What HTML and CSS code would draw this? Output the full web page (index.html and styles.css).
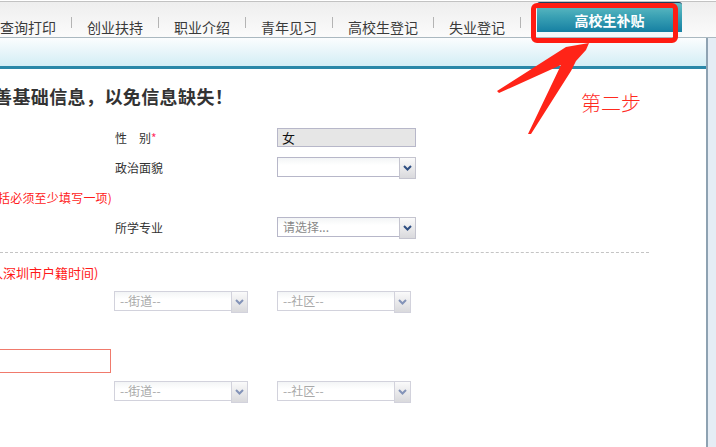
FILE: index.html
```html
<!DOCTYPE html>
<html lang="zh-CN">
<head>
<meta charset="utf-8">
<title>高校生补贴</title>
<link rel="stylesheet" href="styles.css">
</head>
<body>
<div class="page">
  <nav class="nav">
    <span class="nav-item first">查询打印</span><i class="sep"></i>
    <span class="nav-item">创业扶持</span><i class="sep"></i>
    <span class="nav-item">职业介绍</span><i class="sep"></i>
    <span class="nav-item">青年见习</span><i class="sep"></i>
    <span class="nav-item">高校生登记</span><i class="sep"></i>
    <span class="nav-item">失业登记</span><i class="sep"></i>
    <span class="tab">高校生补贴</span>
  </nav>
  <div class="body-area">
    <div class="main">
      <div class="band"></div>
      <div class="content">
        <h2 class="notice">善基础信息，以免信息缺失！</h2>
        <div class="row">
          <span class="label">性&emsp;别<em>*</em></span>
          <div class="input disabled">女</div>
        </div>
        <div class="row">
          <span class="label">政治面貌</span>
          <div class="select"><span class="val"></span><span class="btn"><svg width="9" height="6" viewBox="0 0 9 6"><polyline points="1,1 4.5,4.5 8,1" fill="none" stroke="#2f4f82" stroke-width="2"/></svg></span></div>
        </div>
        <div class="note-row"><span class="note n1">括必须至少填写一项)</span></div>
        <div class="row">
          <span class="label">所学专业</span>
          <div class="select"><span class="val ph">请选择...</span><span class="btn"><svg width="9" height="6" viewBox="0 0 9 6"><polyline points="1,1 4.5,4.5 8,1" fill="none" stroke="#2f4f82" stroke-width="2"/></svg></span></div>
        </div>
        <div class="divider"></div>
        <div class="note-row2"><span class="note n2">入深圳市户籍时间)</span></div>
        <div class="sel-row">
          <div class="select off"><span class="val">--街道--</span><span class="btn"><svg width="9" height="6" viewBox="0 0 9 6"><polyline points="1,1 4.5,4.5 8,1" fill="none" stroke="#8393b8" stroke-width="2"/></svg></span></div>
          <div class="select off"><span class="val">--社区--</span><span class="btn"><svg width="9" height="6" viewBox="0 0 9 6"><polyline points="1,1 4.5,4.5 8,1" fill="none" stroke="#8393b8" stroke-width="2"/></svg></span></div>
        </div>
        <div class="err-input"></div>
        <div class="sel-row second">
          <div class="select off"><span class="val">--街道--</span><span class="btn"><svg width="9" height="6" viewBox="0 0 9 6"><polyline points="1,1 4.5,4.5 8,1" fill="none" stroke="#8393b8" stroke-width="2"/></svg></span></div>
          <div class="select off"><span class="val">--社区--</span><span class="btn"><svg width="9" height="6" viewBox="0 0 9 6"><polyline points="1,1 4.5,4.5 8,1" fill="none" stroke="#8393b8" stroke-width="2"/></svg></span></div>
        </div>
      </div>
    </div>
    <div class="side"></div>
  </div>

  <div class="mark-box"></div>
  <svg class="mark-arrow" width="716" height="447" viewBox="0 0 716 447">
    <polygon points="589,43 566,47 497,91 499,93 561,65 528,134 531,134 571,71 576,61 586,50" fill="#ff2418"/>
  </svg>
  <span class="mark-text">第二步</span>
</div>
</body>
</html>
```
FILE: styles.css
```css
* { box-sizing: border-box; }
html, body { margin: 0; padding: 0; }
body {
  width: 716px;
  height: 447px;
  overflow: hidden;
  background: #fff;
  font-family: "Noto Sans CJK SC", "Noto Sans", sans-serif;
  color: #333;
}
.page {
  position: relative;
  width: 716px;
  height: 447px;
  overflow: hidden;
}
.nav {
  margin-top: 1px;
  height: 37px;
  border-top: 1px solid #c2c2c2;
  border-bottom: 1px solid #aab8c0;
  background: linear-gradient(#eeeeee, #fbfbfb);
  display: flex;
  align-items: flex-end;
}
.nav-item {
  font-size: 14px;
  line-height: 16px;
  padding: 0 15px 2px 15px;
  color: #3a3a3a;
  white-space: nowrap;
}
.nav-item.first { padding-left: 0; }
.sep {
  display: block;
  width: 1px;
  height: 11px;
  margin-bottom: 9px;
  background: #b4b4b4;
}
.tab {
  align-self: stretch;
  margin-left: 16px;
  width: 145px;
  border-top: 1px solid #1f3d5c;
  border-radius: 3px 3px 0 0;
  background: linear-gradient(to bottom, #64bec4 0%, #3aa1b4 40%, #157fa2 86%, #f4f9fb 86%);
  color: #fff;
  font-weight: bold;
  font-size: 14px;
  line-height: 24px;
  padding-top: 5px;
  text-align: center;
}
.body-area {
  display: flex;
  height: 409px;
}
.main {
  width: 706px;
  flex: 0 0 706px;
  background: #fff;
}
.side {
  flex: 1;
  border-left: 2px solid #8ea2b2;
  background: #e5edf5;
}
.band {
  height: 31px;
  background: linear-gradient(#fbfdfe, #d3edf5);
  border-bottom: 3px solid #2a87a8;
}
.content {
  font-size: 12px;
}
.notice {
  margin: 0 0 0 -6px;
  padding: 15px 0 13px;
  font-size: 18px;
  line-height: 25px;
  letter-spacing: 0.4px;
  font-weight: bold;
  color: #333;
  white-space: nowrap;
}
.row {
  display: grid;
  grid-template-columns: 115px 162px 139px;
  align-items: center;
  height: 30px;
}
.label {
  grid-column: 2;
  font-size: 12px;
  color: #333;
}
.label em { font-style: normal; color: #ff3366; }
.input {
  grid-column: 3;
  height: 19px;
  border: 1px solid #b7b7c9;
  font-size: 13px;
  line-height: 17px;
  padding-left: 4px;
  color: #111;
}
.input.disabled { background: #e6e6e6; }
.row .select { grid-column: 3; }
.select {
  display: flex;
  height: 20px;
  border: 1px solid #b7b7c9;
  background: linear-gradient(#f3f5f6, #ffffff 40%);
}
.select .val {
  flex: 1;
  font-size: 12px;
  line-height: 18px;
  padding-left: 5px;
  color: #333;
}
.select .val.ph { color: #888; }
.select .btn {
  width: 17px;
  height: 22px;
  margin: -1px -1px -3px 0;
  border: 1px solid #c4c4cf;
  background: linear-gradient(#fafafa, #d9d9dc);
  display: flex;
  align-items: center;
  justify-content: center;
}
.note-row {
  height: 30px;
  display: flex;
  align-items: center;
}
.note {
  color: #ff1a1a;
  white-space: nowrap;
}
.n1 { font-size: 12px; margin-left: -2px; letter-spacing: 0.2px; }
.n2 { font-size: 13px; margin-left: -10px; }
.divider {
  margin-top: 10px;
  width: 649px;
  border-top: 1px dashed #c4c4c4;
}
.note-row2 {
  margin-top: 9px;
  height: 20px;
  display: flex;
  align-items: center;
}
.sel-row {
  margin-top: 9px;
  display: grid;
  grid-template-columns: 114px 134px 29px 134px;
  height: 20px;
}
.sel-row .select:first-child { grid-column: 2; }
.sel-row .select:last-child { grid-column: 4; }
.select.off { border-color: #d2d2dc; }
.select.off .val { color: #a8a8a8; }
.select.off .btn { border-color: #d2d2dc; }
.sel-row.second { margin-top: 8px; }
.err-input {
  margin-top: 38px;
  margin-left: -10px;
  width: 121px;
  height: 24px;
  border: 1px solid #f07a6c;
}
.mark-box {
  position: absolute;
  left: 531px;
  top: 3px;
  width: 147px;
  height: 40px;
  border: 5px solid #ff1c12;
  border-radius: 6px;
}
.mark-arrow {
  position: absolute;
  left: 0;
  top: 0;
}
.mark-text {
  position: absolute;
  left: 581px;
  top: 90px;
  font-size: 20px;
  line-height: 26px;
  color: #ff2a1e;
  font-weight: 300;
}
```
